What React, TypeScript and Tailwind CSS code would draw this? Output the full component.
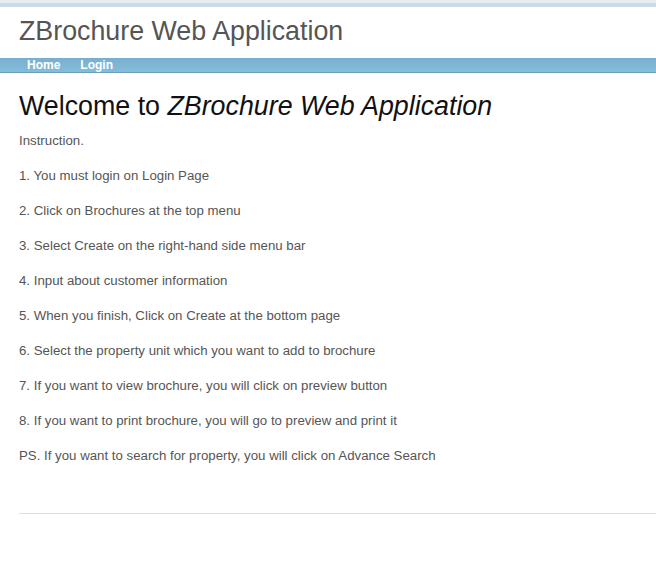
const steps = [
  "1. You must login on Login Page",
  "2. Click on Brochures at the top menu",
  "3. Select Create on the right-hand side menu bar",
  "4. Input about customer information",
  "5. When you finish, Click on Create at the bottom page",
  "6. Select the property unit which you want to add to brochure",
  "7. If you want to view brochure, you will click on preview button",
  "8. If you want to print brochure, you will go to preview and print it",
  "PS. If you want to search for property, you will click on Advance Search",
];

export default function App() {
  return (
    <div className="min-h-[580px] w-[656px] bg-white font-['Liberation_Sans',Arial,sans-serif]">
      <div className="h-[3px] bg-[#e6ecf1]" />
      <div className="h-[4px] bg-[#cadce6]" />
      <header className="flex h-[51px] items-start px-[19px] pt-[10px]">
        <h1 className="text-[26.8px] leading-[28px] text-[#555555]">ZBrochure Web Application</h1>
      </header>
      <nav className="flex h-[15px] items-center gap-[20px] border-b border-[#6b9cb8] bg-gradient-to-b from-[#78afce] to-[#84bddb] pl-[27px]">
        <a className="text-[12px] font-bold leading-none text-white">Home</a>
        <a className="text-[12px] font-bold leading-none text-white">Login</a>
      </nav>
      <main className="px-[19px] pt-[17px]">
        <h2 className="text-[26.8px] leading-[32px] text-[#111111]">
          Welcome to <em>ZBrochure Web Application</em>
        </h2>
        <div className="mt-[10px] flex flex-col gap-[17px] text-[13.25px] leading-[18px] text-[#555555]">
          <p>Instruction.</p>
          {steps.map((s) => (
            <p key={s}>{s}</p>
          ))}
        </div>
        <hr className="mr-[-19px] mt-[48px] border-t border-[#d5e2e8]" />
      </main>
    </div>
  );
}
